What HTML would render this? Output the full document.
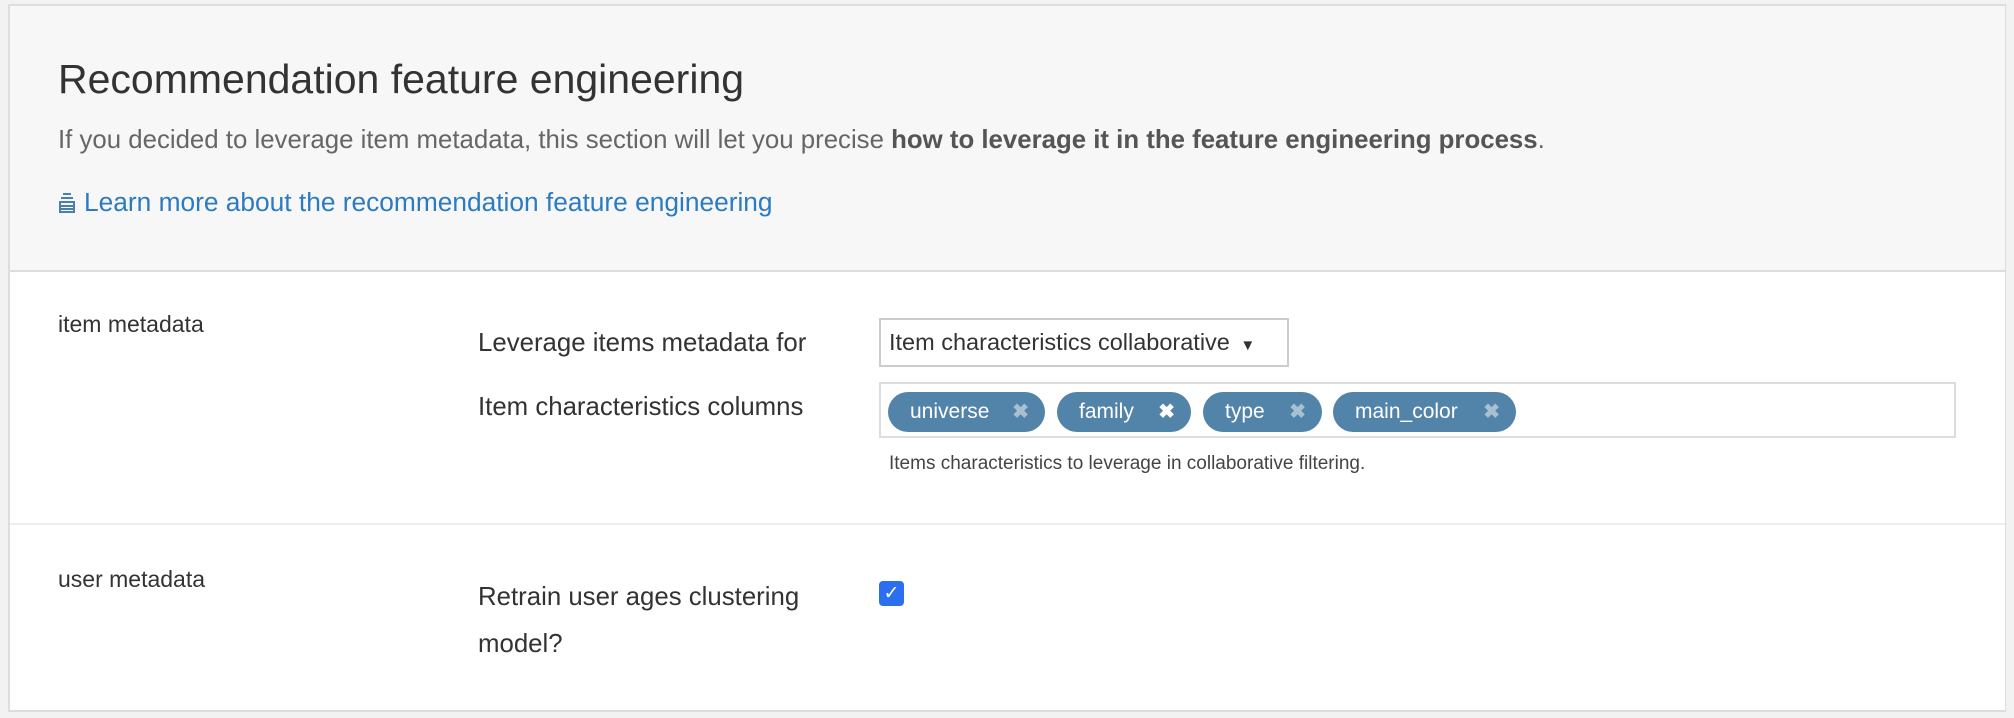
<!DOCTYPE html>
<html><head><meta charset="utf-8"><style>
body{margin:0;width:2014px;height:718px;background:#f2f2f2;font-family:"Liberation Sans",sans-serif;color:#333;overflow:hidden;position:relative}
.card{position:absolute;left:8px;top:4px;width:1995px;height:704px;background:#fff;border:2px solid #ddd;border-right:1px solid #ddd}
.head{position:absolute;left:0;top:0;width:100%;height:264px;background:#f7f7f7;border-bottom:2px solid #ddd}
.abs{position:absolute;white-space:nowrap}
.tag{position:absolute;top:8px;height:40px;border-radius:20px;background:#5283a8;color:#fff;font-size:21px;line-height:40px;padding-left:22px;box-sizing:border-box}
.tag b{position:absolute;right:16px;top:0;color:#a9bfd2;font-size:20px}
</style></head><body>
<div class="card">
 <div class="head">
  <div class="abs" style="left:48px;top:50px;font-size:41px;color:#333">Recommendation feature engineering</div>
  <div class="abs" style="left:48px;top:120px;font-size:25.8px;color:#666">If you decided to leverage item metadata, this section will let you precise <b style="color:#555">how to leverage it in the feature engineering process</b>.</div>
  <div class="abs" style="left:48px;top:181px;font-size:26.3px;color:#2b7bc2">
   <svg width="18" height="22" viewBox="0 0 18 22" style="vertical-align:-3px;margin-right:8px"><g fill="none" stroke="#4a7fb0" stroke-width="2"><path d="M5 2h8M3 6h12M2 10h14v10H2zM2 14h14M2 17h14"/></g></svg>Learn more about the recommendation feature engineering</div>
 </div>
 <div class="abs" style="left:48px;top:305px;font-size:23px">item metadata</div>
 <div class="abs" style="left:468px;top:323px;font-size:25.8px">Leverage items metadata for</div>
 <div class="abs" style="left:869px;top:312px;width:410px;height:49px;border:2px solid #ccc;box-sizing:border-box;font-size:23.5px;line-height:45px;padding-left:8px">Item characteristics collaborative <span style="font-size:15px;margin-left:4px">▼</span></div>
 <div class="abs" style="left:468px;top:387px;font-size:25.8px">Item characteristics columns</div>
 <div class="abs" style="left:869px;top:376px;width:1077px;height:56px;border:2px solid #ddd;box-sizing:border-box">
  <div class="tag" style="left:7px;width:157px">universe<b>✖</b></div>
  <div class="tag" style="left:176px;width:134px">family<b style="color:#fff">✖</b></div>
  <div class="tag" style="left:322px;width:119px">type<b>✖</b></div>
  <div class="tag" style="left:452px;width:183px">main_color<b>✖</b></div>
 </div>
 <div class="abs" style="left:879px;top:447px;font-size:19px;color:#444">Items characteristics to leverage in collaborative filtering.</div>
 <div class="abs" style="left:0;top:517px;width:100%;height:2px;background:#eee"></div>
 <div class="abs" style="left:48px;top:560px;font-size:23px">user metadata</div>
 <div class="abs" style="left:468px;top:568px;font-size:25.8px;line-height:47px">Retrain user ages clustering<br>model?</div>
 <div class="abs" style="left:869px;top:575px;width:25px;height:25px;border-radius:4px;background:#2b6ff0;color:#fff;font-size:19px;line-height:25px;text-align:center">✓</div>
</div>
</body></html>
